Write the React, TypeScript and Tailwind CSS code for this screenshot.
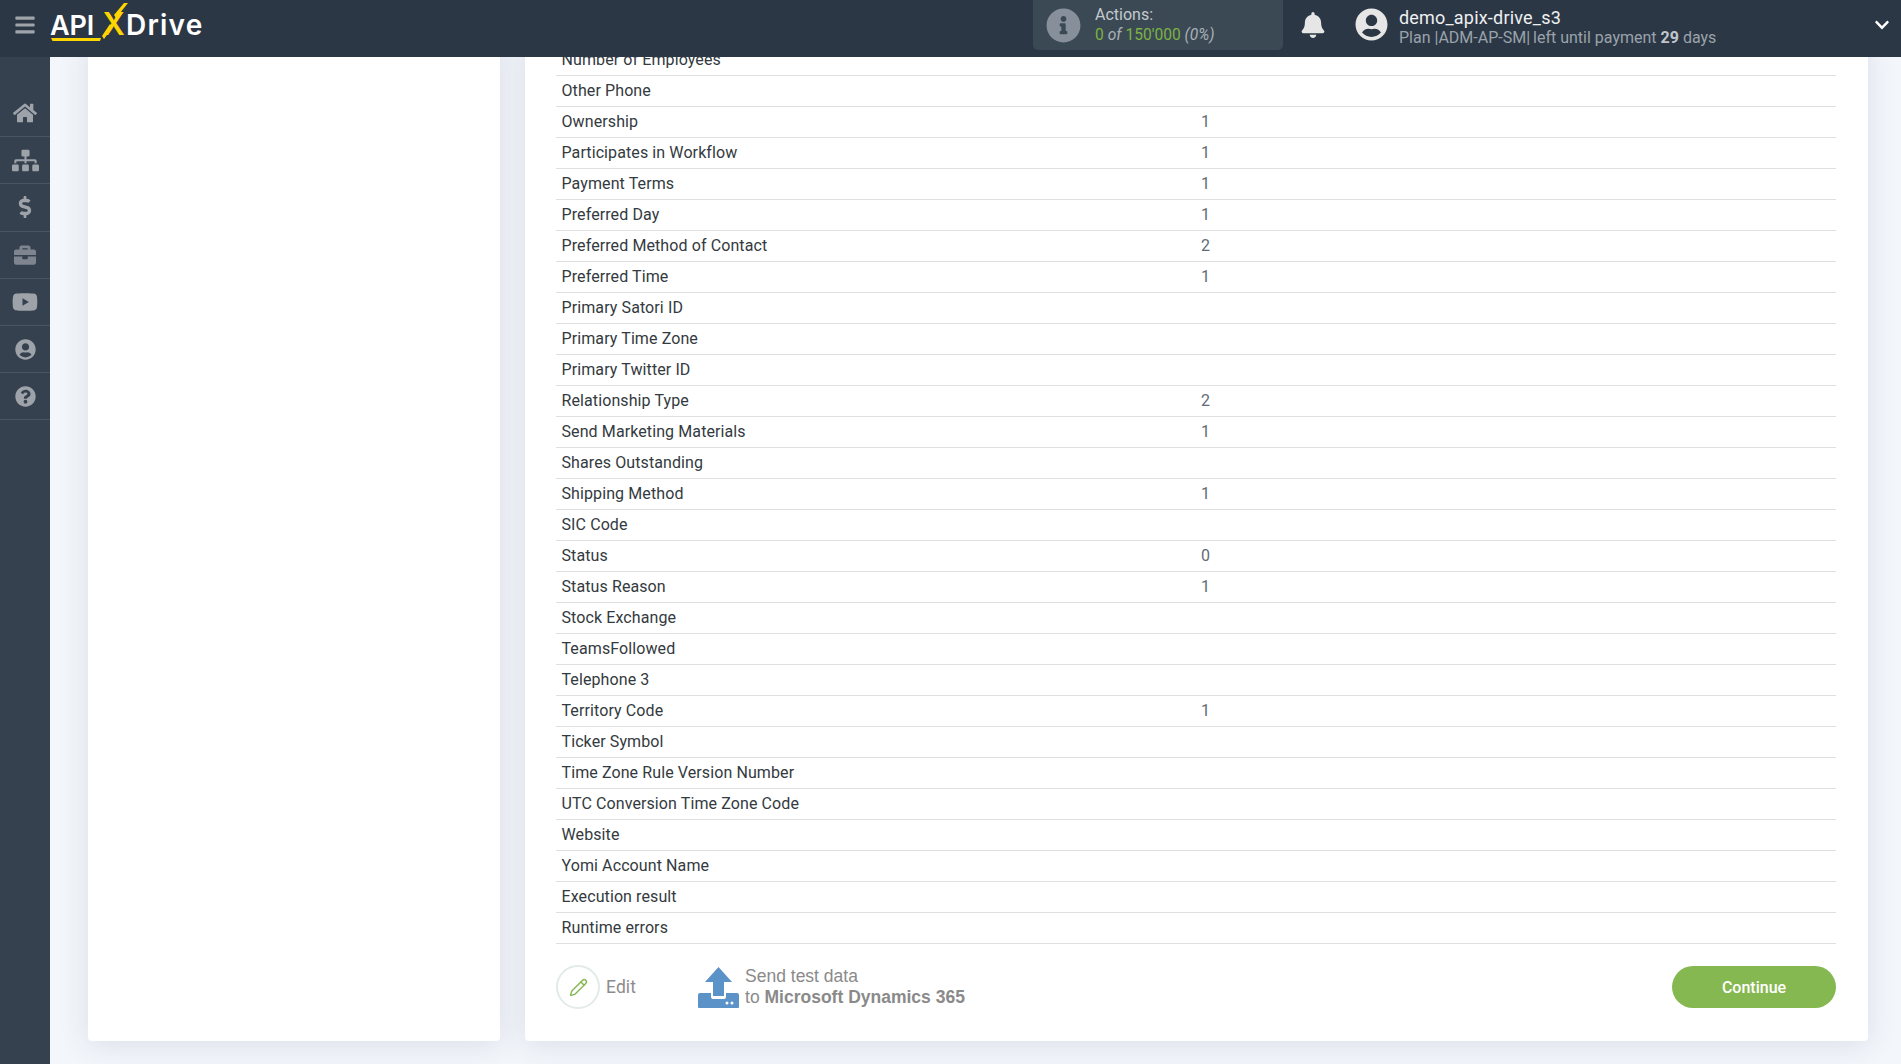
import React from 'react';
import {
  FaBars,
  FaBell,
  FaBriefcase,
  FaChevronDown,
  FaDollarSign,
  FaHome,
  FaInfoCircle,
  FaQuestionCircle,
  FaSitemap,
  FaUserCircle,
  FaYoutube,
} from 'react-icons/fa';
import { Pencil } from 'lucide-react';

const rows: [string, string][] = [
  ['Number of Employees', ''],
  ['Other Phone', ''],
  ['Ownership', '1'],
  ['Participates in Workflow', '1'],
  ['Payment Terms', '1'],
  ['Preferred Day', '1'],
  ['Preferred Method of Contact', '2'],
  ['Preferred Time', '1'],
  ['Primary Satori ID', ''],
  ['Primary Time Zone', ''],
  ['Primary Twitter ID', ''],
  ['Relationship Type', '2'],
  ['Send Marketing Materials', '1'],
  ['Shares Outstanding', ''],
  ['Shipping Method', '1'],
  ['SIC Code', ''],
  ['Status', '0'],
  ['Status Reason', '1'],
  ['Stock Exchange', ''],
  ['TeamsFollowed', ''],
  ['Telephone 3', ''],
  ['Territory Code', '1'],
  ['Ticker Symbol', ''],
  ['Time Zone Rule Version Number', ''],
  ['UTC Conversion Time Zone Code', ''],
  ['Website', ''],
  ['Yomi Account Name', ''],
  ['Execution result', ''],
  ['Runtime errors', ''],
];

const navIcons = [
  <FaHome className="w-[24px] h-[24px]" />,
  <FaSitemap className="w-[27px] h-[27px]" />,
  <FaDollarSign className="w-[22px] h-[22px]" />,
  <FaBriefcase className="w-[22px] h-[22px] opacity-70" />,
  <FaYoutube className="w-[26px] h-[26px]" />,
  <FaUserCircle className="w-[21px] h-[21px]" />,
  <FaQuestionCircle className="w-[21px] h-[21px]" />,
];

const Logo = () => (
  <div className="relative flex items-baseline h-[40px] font-['Inter',sans-serif] font-semibold text-[27px] leading-[40px] text-white tracking-[-0.2px]">
    <span className="w-[51px]">API</span>
    <span className="relative w-[25px] text-center text-[#ffd500] text-[31px]">
      X
      <svg className="absolute left-[-2px] top-[-3px] w-[30px] h-[40px]" viewBox="0 0 30 40" fill="#ffd500">
        <polygon points="25,2 29,2 17,17 15,14" />
        <polygon points="11,23 13,27 5,38 3,35" />
      </svg>
    </span>
    <span className="text-[28px] tracking-[1.2px]">Drive</span>
    <span className="absolute left-[1px] top-[34px] w-[50px] h-[3px] bg-[#ffd500] [clip-path:polygon(0_0,100%_0,98%_100%,3%_100%)]" />
  </div>
);

const Header = () => (
  <header className="h-[57px] shrink-0 bg-[#2c3745] flex items-start font-['Roboto',sans-serif]">
    <div className="w-[50px] h-[50px] flex items-center justify-center text-[#a0a5ab]">
      <FaBars className="w-[20px] h-[22px]" />
    </div>
    <div className="pt-[4px]">
      <Logo />
    </div>
    <div className="ml-auto w-[250px] h-[50px] rounded-b-[5px] bg-[#3b4955] flex items-center pl-[13px]">
      <FaInfoCircle className="w-[35px] h-[35px] text-[#87909a]" />
      <div className="ml-[14px] text-[16px] leading-[20px]">
        <div className="text-[#c4c9cd]">Actions:</div>
        <div className="text-[15.6px] text-[#7cb342]">
          0 <span className="italic text-[#a9b0b6]">of</span> 150'000 <span className="italic text-[#a9b0b6]">(0%)</span>
        </div>
      </div>
    </div>
    <div className="w-[72px] h-[50px] flex items-center pl-[18px] text-[#e6e6e6]">
      <FaBell className="w-[24px] h-[26px]" />
    </div>
    <FaUserCircle className="mt-[8px] w-[33px] h-[33px] text-[#e6e6e6]" />
    <div className="ml-[11px] w-[463px] pt-[6px]">
      <div className="text-[18px] leading-[23px] text-[#eef0f1] tracking-[0.2px]">demo_apix-drive_s3</div>
      <div className="text-[16px] leading-[18px] text-[#9aa3ab]">
        Plan |ADM-AP-SM|<span className="ml-[3px]">left until payment</span> <b className="text-[#c0c5ca]">29</b> days
      </div>
    </div>
    <div className="w-[39px] h-[50px] flex items-center justify-center text-white">
      <FaChevronDown className="w-[16px] h-[16px]" />
    </div>
  </header>
);

const Sidebar = () => (
  <aside className="w-[50px] shrink-0 bg-[#364150] pt-[33px] text-[#9ea3a9]">
    {navIcons.map((icon, i) => (
      <div key={i} className="h-[47.2px] border-b border-[#4a5564] flex items-center justify-center">
        {icon}
      </div>
    ))}
  </aside>
);

const UploadIcon = () => (
  <svg className="w-[41px] h-[41px]" viewBox="0 0 41 41" fill="#5b92c8">
    <polygon points="20.500,0 34,15 26,15 26,29 15,29 15,15 7,15" />
    <path d="M0 28 a2 2 0 0 1 2 -2 H13 V30 a2 2 0 0 0 2 2 H26 a2 2 0 0 0 2 -2 V26 H39 a2 2 0 0 1 2 2 V40 a1 1 0 0 1 -1 1 H1 a1 1 0 0 1 -1 -1 Z" />
    <circle cx="29" cy="36" r="1.500" fill="#fff" />
    <circle cx="34" cy="36" r="1.500" fill="#fff" />
  </svg>
);

export default function App() {
  return (
    <div className="h-screen w-full overflow-hidden flex flex-col bg-[#f3f6fb]">
      <Header />
      <div className="flex-1 flex min-h-0">
        <Sidebar />
        <main className="flex-1 min-w-0 overflow-hidden pl-[38px] pr-[33px]">
          <div className="-mt-[20px] h-[1004px] flex gap-[25px]">
            <div className="w-[412px] shrink-0 bg-white rounded-[4px] shadow-[0_4px_30px_rgba(50,60,80,0.12)]" />
            <div className="flex-1 bg-white rounded-[4px] shadow-[0_4px_30px_rgba(50,60,80,0.12)] pt-[8px] pl-[31px] pr-[32px] font-['Roboto',sans-serif]">
              {rows.map(([label, value]) => (
                <div key={label} className="h-[31px] border-b border-[#e0e0e0] flex items-center text-[16px] leading-[30px]">
                  <div className="w-1/2 pl-[5.500px] text-[#333a40] tracking-[0.1px]">{label}</div>
                  <div className="w-1/2 pl-[5px] text-[#5f6b76]">{value}</div>
                </div>
              ))}
              <div className="mt-[21px] flex items-center">
                <div className="w-[44px] h-[44px] rounded-full border-2 border-[#e3ebe7] flex items-center justify-center text-[#86b851]">
                  <Pencil className="w-[19px] h-[19px]" strokeWidth={1.8} />
                </div>
                <span className="ml-[6px] pt-px text-[17.5px] text-[#8c8c8c] tracking-[0.1px]">Edit</span>
                <div className="ml-[62px]">
                  <UploadIcon />
                </div>
                <div className="ml-[6px] font-['Liberation_Sans',sans-serif] text-[17.5px] leading-[21px] text-[#8a8a8a]">
                  <div>Send test data</div>
                  <div>
                    to <b>Microsoft Dynamics 365</b>
                  </div>
                </div>
                <button className="ml-auto w-[164px] h-[42px] pt-px rounded-full bg-[#86b851] text-white text-[16px] font-medium">
                  Continue
                </button>
              </div>
            </div>
          </div>
        </main>
      </div>
    </div>
  );
}
